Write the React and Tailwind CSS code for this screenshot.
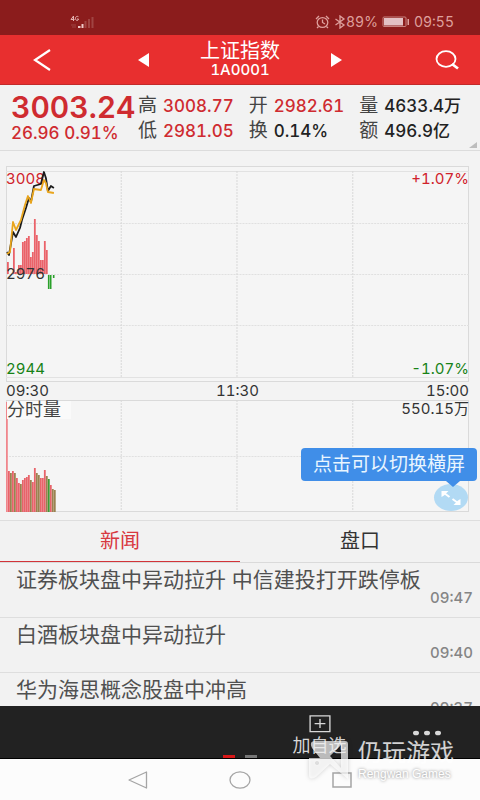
import React from "react";

const stats = [
  { label: "高", value: "3008.77", tone: "text-[#cf2b30]" },
  { label: "开", value: "2982.61", tone: "text-[#cf2b30]" },
  { label: "量", value: "4633.4万", tone: "text-[#222]" },
  { label: "低", value: "2981.05", tone: "text-[#cf2b30]" },
  { label: "换", value: "0.14%", tone: "text-[#222]" },
  { label: "额", value: "496.9亿", tone: "text-[#222]" },
];

const news = [
  { title: "证券板块盘中异动拉升 中信建投打开跌停板", time: "09:47" },
  { title: "白酒板块盘中异动拉升", time: "09:40" },
  { title: "华为海思概念股盘中冲高", time: "09:37" },
];

// [x, height] above the zero line
const momentumUp = [
  [1, 12], [7, 26], [9, 2], [12, 9], [14, 9], [16, 32], [18, 33], [20, 36], [22, 38],
  [24, 17], [26, 22], [28, 55], [30, 39], [32, 33], [34, 14], [36, 14], [38, 33], [40, 24],
];
const momentumDown = [[42, 14], [44, 14], [47, 3]];

const RED = "#e8636a";
const GREEN = "#3f9a35";
const OLIVE = "#9a8250";
const volume = [
  [0, 110, "#f0868c"], [2, 41, RED], [4, 39, OLIVE], [6, 41, RED], [8, 39, OLIVE], [10, 34, RED],
  [12, 29, RED], [14, 28, OLIVE], [16, 32, RED], [18, 34, RED], [20, 35, RED], [22, 37, RED],
  [24, 32, OLIVE], [26, 30, RED], [28, 44, RED], [30, 39, OLIVE], [32, 37, OLIVE], [34, 34, RED],
  [36, 34, RED], [38, 42, RED], [40, 36, OLIVE], [42, 33, GREEN], [44, 27, RED], [46, 23, OLIVE],
  [48, 22, OLIVE],
];

function StatusBar() {
  return (
    <div className="flex h-[35px] shrink-0 items-center justify-between bg-[#8b1c1c] pt-2 pr-[26px] pl-[70px] text-sm text-[#dfa09d]">
      <svg width="24" height="14" viewBox="0 0 24 14" aria-label="4G">
        <path d="M3.500 1 L1 4.500 H4.500 M3.500 1 V6 M8.500 2 C8 1 5.500 1 5.500 3.500 C5.500 6 8.500 6 8.500 4 H7" fill="none" stroke="#e6b5b3" />
        <path d="M1 10h5M2 12h4" stroke="#a04442" />
        <path d="M8 11h2.500v2h-2.500z M11.500 9h2v4h-2z" fill="#efc9c7" />
        <path d="M14.500 6h2v7h-2z M18 4h2v9h-2z M21.500 2h2v11h-2z" fill="#a04442" />
      </svg>
      <div className="flex items-center">
        <svg width="15" height="14" viewBox="0 0 15 14" fill="none" stroke="currentColor" strokeWidth="1.300">
          <ellipse cx="7.500" cy="7.500" rx="5.300" ry="4.800" />
          <path d="M7.500 4.500v3l2.500 1.500M1 4l3-3M14 4l-3-3M3.500 11.500l-1.500 1.500M11.500 11.500l1.500 1.500" />
        </svg>
        <svg className="ml-1" width="12" height="14" viewBox="0 0 12 14" fill="none" stroke="currentColor" strokeWidth="1.300">
          <path d="M1.500 4l8.500 6-4 3V1l4 3-8.500 6" />
        </svg>
        <span>89%</span>
        <svg className="mx-1" width="28" height="12" viewBox="0 0 28 12">
          <rect x="1" y="1" width="23" height="9.500" rx="1" fill="none" stroke="#c98380" />
          <rect x="2" y="2" width="19" height="7.500" fill="#e3c0c4" />
          <rect x="25.500" y="3" width="1.500" height="6" fill="#dfa09d" />
        </svg>
        <span>09:55</span>
      </div>
    </div>
  );
}

function Header() {
  return (
    <header className="grid h-[50px] shrink-0 grid-cols-[1fr_204px_1fr] items-center border-b border-[#c22a2a] bg-[#e82f2f] text-white">
      <button aria-label="返回" className="ml-[33px] justify-self-start">
        <svg width="18" height="24" viewBox="0 0 18 24" fill="none" stroke="currentColor" strokeWidth="2.200">
          <path d="M17 2L2 12l15 10" />
        </svg>
      </button>
      <div className="flex items-center justify-between">
        <button aria-label="上一个">
          <svg width="11" height="16" viewBox="0 0 11 16" fill="currentColor"><path d="M11 1v14L0 8z" /></svg>
        </button>
        <h1 className="text-center">
          <span className="block text-xl leading-5">上证指数</span>
          <span className="block text-[15px] leading-[18px] font-medium">1A0001</span>
        </h1>
        <button aria-label="下一个">
          <svg width="11" height="16" viewBox="0 0 11 16" fill="currentColor"><path d="M0 1v14l11-7z" /></svg>
        </button>
      </div>
      <button aria-label="搜索" className="mr-[21px] justify-self-end">
        <svg width="24" height="20" viewBox="0 0 24 20" fill="none" stroke="currentColor" strokeWidth="1.800">
          <ellipse cx="11" cy="9" rx="9.500" ry="7.800" />
          <path d="M17 14l6 4.500" strokeWidth="2.800" />
        </svg>
      </button>
    </header>
  );
}

function Quote() {
  return (
    <section className="relative flex h-[66px] shrink-0 border-b border-[#dcdcdc] bg-[#f2f2f2] pt-2 pr-[10px] pl-[11px]">
      <div className="w-[127px] shrink-0 whitespace-nowrap text-[#cf2b30]">
        <div className="text-[30px] leading-7 font-semibold">3003.24</div>
        <div className="text-[17px] leading-6 font-medium">26.96 0.91%</div>
      </div>
      <dl className="grid flex-1 grid-cols-3 content-start whitespace-nowrap">
        {stats.map((s) => (
          <div key={s.label} className="flex h-[25px] items-center">
            <dt className="w-[25px] text-[19px] leading-6 text-[#444]">{s.label}</dt>
            <dd className={"text-[17px] leading-6 font-medium " + s.tone}>{s.value}</dd>
          </div>
        ))}
      </dl>
      <svg className="absolute right-[3px] bottom-[2px]" width="8" height="6" viewBox="0 0 8 6">
        <path d="M8 0v6H0z" fill="#bdbdbd" />
      </svg>
    </section>
  );
}

function PriceChart() {
  return (
    <div className="relative h-[216px] text-[15px] leading-4">
      <svg className="block h-full w-full" viewBox="0 0 464 216" preserveAspectRatio="none" fill="none">
        <rect x="0.500" y="0.500" width="463" height="215" fill="#f5f5f5" stroke="#dadada" />
        <path d="M0 5.500H464M0 211.500H464" stroke="#e2e2e2" />
        <path d="M0 57.500H464M0 108.500H464M0 159.500H464" stroke="#e0e0e0" strokeDasharray="2 1" />
        <path d="M115.500 5V211M231.500 5V211M347.500 5V211" stroke="#d8d8d8" strokeDasharray="2 1" />
        {momentumUp.map(([x, h]) => (
          <rect key={x} x={x} y={108 - h} width="1.800" height={h} fill="#ea6269" />
        ))}
        {momentumDown.map(([x, h]) => (
          <rect key={x} x={x} y="109" width="1.600" height={h} fill="#2aa02a" />
        ))}
      </svg>
      <span className="absolute top-[5px] left-0 text-[#d0222b]">3008</span>
      <span className="absolute top-[5px] right-0 text-[#d0222b]">+1.07%</span>
      <span className="absolute top-[100px] left-0 text-[#333]">2976</span>
      <span className="absolute bottom-[5px] left-0 text-[#178217]">2944</span>
      <span className="absolute right-0 bottom-[5px] text-[#178217]">-1.07%</span>
      <svg className="absolute inset-0 h-full w-full" viewBox="0 0 464 216" preserveAspectRatio="none" fill="none" strokeWidth="1.800" strokeLinejoin="round">
        <path d="M1 86L3 89L7 66L10 71L14 62L16 54L20 42L23 32L25 36L28 20L35 18L38 6L40 12L42 25L45 20L48 22" stroke="#1c1c1c" />
        <path d="M1 88L4 86L7 56L10 64L15 54L19 39L22 30L25 37L28 23L35 24L38 14L40 17L42 26L48 27" stroke="#e9a51c" />
      </svg>
    </div>
  );
}

function VolumeChart() {
  return (
    <div className="relative h-[112px] text-[15px]">
      <svg className="block h-full w-full" viewBox="0 0 464 112" preserveAspectRatio="none" fill="none">
        <rect x="0.500" y="0.500" width="463" height="111" fill="#f5f5f5" stroke="#dadada" />
        <path d="M0 56.500H464" stroke="#e0e0e0" strokeDasharray="2 1" />
        <path d="M115.500 0V112M231.500 0V112M347.500 0V112" stroke="#d8d8d8" strokeDasharray="2 1" />
        {volume.map(([x, h, fill]) => (
          <rect key={x} x={x} y={112 - h} width="1.800" height={h} fill={fill} />
        ))}
      </svg>
      <span className="absolute top-[1px] left-[1px] w-16 bg-[#fafafa] text-[18px] leading-[18px] text-[#444]">分时量</span>
      <span className="absolute top-[1px] right-0 leading-4 text-[#333]">550.15万</span>
      <button aria-label="切换横屏" className="absolute right-[1px] bottom-[1px] flex h-[27px] w-[34px] items-center justify-center rounded-[50%] bg-[#b2daf4] text-white">
        <svg width="20" height="16" viewBox="0 0 20 16" fill="currentColor" stroke="currentColor">
          <path d="M0.500 1h7l-2 2-2.500 2.500-2.500 1.500zM19.500 15h-7l2-2 2.500-2.500 2.500-1.500z" strokeWidth="0" />
          <path d="M3 3l5.500 4M17 13l-5.500-4" strokeWidth="2" />
        </svg>
      </button>
      <div role="tooltip" className="absolute -right-2 bottom-[31px] rounded-sm bg-[#408ee8] px-3 text-[19px] leading-[33px] whitespace-nowrap text-[#eaf6ff]">
        点击可以切换横屏
        <svg className="absolute top-full right-[17px]" width="14" height="7" viewBox="0 0 14 7"><path d="M0 0h14L7 6z" fill="#408ee8" /></svg>
      </div>
    </div>
  );
}

function News() {
  return (
    <section className="min-h-0 flex-1 overflow-hidden border-t border-[#dedede] bg-[#f2f2f2]">
      <div role="tablist" className="grid grid-cols-2 border-b border-[#dadada] text-xl">
        <button role="tab" aria-selected="true" className="h-[41px] border-b border-[#d23439] text-[#d8383f]">新闻</button>
        <button role="tab" aria-selected="false" className="h-[41px] border-b border-transparent text-[#333]">盘口</button>
      </div>
      <ul>
        {news.map((n) => (
          <li key={n.time} className="border-b border-[#dedede]">
            <a href="#news" className="block pt-[6px] pr-[7px] pb-[11px] pl-4">
              <span className="block text-[21px] leading-[21px] whitespace-nowrap text-[#505050]">{n.title}</span>
              <time className="block text-right text-[15px] leading-4 font-medium text-[#858585]">{n.time}</time>
            </a>
          </li>
        ))}
      </ul>
    </section>
  );
}

function ActionBar() {
  return (
    <div className="relative flex h-[53px] shrink-0 justify-end border-b border-black bg-[#222] text-[#d8d8d8]">
      <button className="flex w-[107px] flex-col items-center gap-px pt-[9px]">
        <svg width="24" height="20" viewBox="0 0 24 20" fill="none" stroke="currentColor" strokeWidth="1.500">
          <path d="M1 1h22v17.500H1zM12 4.500v10M6 9.500h12" />
        </svg>
        <span className="text-[18px] leading-6">加自选</span>
      </button>
      <button aria-label="更多" className="flex w-[107px] justify-center pt-6">
        <svg width="28" height="6" viewBox="0 0 28 6" fill="currentColor">
          <ellipse cx="3" cy="3" rx="3" ry="2.300" /><ellipse cx="14" cy="3" rx="3" ry="2.300" /><ellipse cx="25" cy="3" rx="3" ry="2.300" />
        </svg>
      </button>
      <div className="absolute inset-x-0 bottom-0 flex justify-center gap-[10px]">
        <span className="h-[3px] w-3 bg-[#d81818]" />
        <span className="h-[3px] w-3 bg-[#777]" />
      </div>
    </div>
  );
}

function SystemNav() {
  return (
    <nav className="flex h-[41px] shrink-0 items-center justify-center bg-[#fcfcfc] text-[#a5a5a5]">
      <button aria-label="返回键" className="flex w-[102px] justify-center">
        <svg width="20" height="18" viewBox="0 0 20 18" fill="none" stroke="currentColor" strokeWidth="1.300"><path d="M18.500 1v16L1 9z" strokeLinejoin="round" /></svg>
      </button>
      <button aria-label="主页" className="flex w-[102px] justify-center">
        <svg width="22" height="18" viewBox="0 0 22 18" fill="none" stroke="currentColor" strokeWidth="1.300"><ellipse cx="11" cy="9" rx="10" ry="8.200" /></svg>
      </button>
      <button aria-label="最近任务" className="flex w-[102px] justify-center">
        <svg width="20" height="16" viewBox="0 0 20 16" fill="none" stroke="currentColor" strokeWidth="1.500"><rect x="1" y="1" width="18" height="14" /></svg>
      </button>
    </nav>
  );
}

function Watermark() {
  return (
    <div className="pointer-events-none absolute right-[26px] bottom-[19px] flex items-center gap-[9px]">
      <svg width="41" height="41" viewBox="0 0 41 41" className="drop-shadow-[0_0_2px_rgba(0,0,0,0.25)]">
        <path fill="#fff" fillOpacity="0.700" fillRule="evenodd" d="M6 1H37Q40 1 40 4V39L22 24L8 37Q1 41 1 35V18H12L4 8Q1 2 6 1ZM22 16L33 28V5ZM9 21a2 2 0 1 0 .1 0Z" />
      </svg>
      <div className="text-white/80">
        <div className="text-2xl leading-7">仍玩游戏</div>
        <div className="font-['Liberation_Sans',sans-serif] text-xs leading-[14px] text-white [text-shadow:0_0_3px_rgba(0,0,0,0.5)]">Rengwan Games</div>
      </div>
    </div>
  );
}

export default function App() {
  return (
    <div className="relative flex h-screen flex-col overflow-hidden bg-[#f3f3f3] font-['Inter','Noto_Sans_CJK_SC',sans-serif] tabular-nums">
      <StatusBar />
      <Header />
      <Quote />
      <main className="flex min-h-0 flex-1 flex-col pt-[15px]">
        <section className="mb-2 shrink-0 pr-[11px] pl-[6px]">
          <PriceChart />
          <div className="flex h-[18px] items-center justify-between text-[15px] leading-4 text-[#333]">
            <span>09:30</span>
            <span>11:30</span>
            <span>15:00</span>
          </div>
          <VolumeChart />
        </section>
        <News />
      </main>
      <ActionBar />
      <SystemNav />
      <Watermark />
    </div>
  );
}
